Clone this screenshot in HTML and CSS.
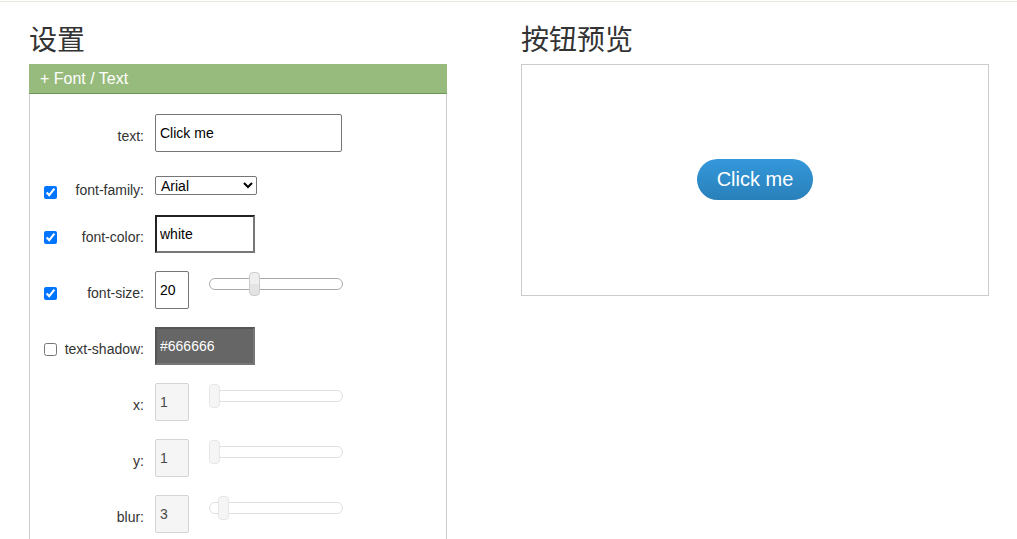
FILE: index.html
```html
<!DOCTYPE html>
<html>
<head>
    <meta charset="UTF-8">
    <title>按钮生成器</title>
    <link rel="stylesheet" href="styles.css">
</head>
<body>

<div class="topline"></div>

<div class="page">
    <div class="col">
        <h2>设置</h2>
        <div class="panel">
            <div class="panel-head">+ Font / Text</div>
            <div class="panel-body">
                <div class="row first">
                    <span class="check"></span>
                    <label>text:</label>
                    <input class="txt wide" type="text" value="Click me">
                </div>
                <div class="row short">
                    <span class="check"><input type="checkbox" checked></span>
                    <label>font-family:</label>
                    <select>
                        <option>Arial</option>
                        <option>Verdana</option>
                        <option>Georgia</option>
                    </select>
                </div>
                <div class="row">
                    <span class="check"><input type="checkbox" checked></span>
                    <label>font-color:</label>
                    <input class="txt color" type="text" value="white">
                </div>
                <div class="row">
                    <span class="check"><input type="checkbox" checked></span>
                    <label>font-size:</label>
                    <input class="txt num" type="text" value="20">
                    <input class="slider" type="range" min="0" max="60" value="20">
                </div>
                <div class="row">
                    <span class="check"><input type="checkbox"></span>
                    <label>text-shadow:</label>
                    <input class="txt color dark" type="text" value="#666666">
                </div>
                <div class="row">
                    <span class="check"></span>
                    <label>x:</label>
                    <input class="txt num" type="text" value="1" disabled>
                    <input class="slider" type="range" min="0" max="100" value="0" disabled>
                </div>
                <div class="row">
                    <span class="check"></span>
                    <label>y:</label>
                    <input class="txt num" type="text" value="1" disabled>
                    <input class="slider" type="range" min="0" max="100" value="0" disabled>
                </div>
                <div class="row">
                    <span class="check"></span>
                    <label>blur:</label>
                    <input class="txt num" type="text" value="3" disabled>
                    <input class="slider" type="range" min="0" max="40" value="3" disabled>
                </div>
            </div>
        </div>
    </div>

    <div class="col">
        <h2>按钮预览</h2>
        <div class="preview">
            <a class="demo-btn">Click me</a>
        </div>
    </div>
</div>

</body>
</html>
```

FILE: styles.css
```css
html {
    box-sizing: border-box;
}
*, *:before, *:after {
    box-sizing: inherit;
}

body{
    margin: 0;
    font-family: "Liberation Sans", Arial, "Noto Sans CJK SC", sans-serif;
    color: #333;
    background: #fff;
}

.topline{
    margin-top: 1px;
    border-top: 1px solid #e8e4de;
}

.page{
    display: grid;
    grid-template-columns: 418px 468px;
    column-gap: 74px;
    padding: 0 29px;
}

h2{
    font-family: "Noto Sans CJK SC", sans-serif;
    font-weight: normal;
    font-size: 28px;
    line-height: 34px;
    margin: 19px 0 9px 0;
    color: #333;
}

/* settings panel */

.panel-head{
    background-color: #97bb7c;
    border-bottom: 1px solid #6f9457;
    color: #fff;
    font-size: 16px;
    line-height: 28px;
    padding: 1px 0 0 11px;
}

.panel-body{
    border: 1px solid #ccc;
    border-top: none;
    padding: 20px 0 20px 14px;
}

.row{
    display: flex;
    align-items: flex-start;
    height: 38px;
    margin-bottom: 18px;
}
.row.first{
    margin-bottom: 24px;
}
.row.short{
    height: 21px;
}

.check{
    width: 13px;
    flex: none;
}
.check input{
    margin: 16px 0 0 0;
    width: 13px;
    height: 13px;
}
.short .check input{
    margin-top: 10px;
}

.row label{
    width: 87px;
    flex: none;
    text-align: right;
    font-size: 14px;
    line-height: 16px;
    padding-top: 14px;
    color: #333;
}
.short label{
    padding-top: 6px;
}

.txt{
    margin: 0 0 0 11px;
    height: 38px;
    font-family: "Liberation Sans", Arial, sans-serif;
    font-size: 14px;
    color: #000;
    border: 1px solid #767676;
    border-radius: 2px;
    padding: 0 4px;
    background: #fff;
}
.txt.wide{
    width: 187px;
}
.txt.num{
    width: 34px;
}
.txt.color{
    width: 100px;
    border: 2px solid;
    border-color: #222 #777 #777 #222;
    border-radius: 0;
    padding: 0 3px;
}
.txt.dark{
    background: #666;
    color: #fff;
    border-color: #555 #777 #777 #555;
}
.txt:disabled{
    background: #f5f5f5;
    border-color: #d4d4d4;
    color: #4a4a4a;
}

select{
    margin-left: 11px;
    width: 102px;
    height: 19px;
    padding: 0 0 0 1px;
    font-family: "Liberation Sans", Arial, sans-serif;
    font-size: 14px;
    color: #000;
    border: 1px solid #767676;
    border-radius: 2px;
    background: #fff;
}

/* sliders */

.slider{
    -webkit-appearance: none;
    appearance: none;
    width: 134px;
    height: 24px;
    margin: 1px 0 0 20px;
    background: transparent;
}
.slider::-webkit-slider-runnable-track{
    height: 12px;
    border: 1px solid #aaa;
    border-radius: 6px;
    background: #fff;
}
.slider::-webkit-slider-thumb{
    -webkit-appearance: none;
    width: 11px;
    height: 24px;
    margin: -7px 0 0 -1px;
    border: 1px solid #ccc;
    border-radius: 4px;
    background: linear-gradient(#efefef 50%, #e4e4e4 50%);
}
.slider:disabled::-webkit-slider-runnable-track{
    border-color: #e0e0e0;
}
.slider:disabled::-webkit-slider-thumb{
    border-color: #e6e6e6;
    background: #f5f5f5;
}

/* preview */

.preview{
    height: 232px;
    border: 1px solid #ccc;
    display: flex;
    align-items: center;
    justify-content: center;
}

.demo-btn{
    display: inline-block;
    font-family: "Liberation Sans", Arial, sans-serif;
    font-size: 20px;
    line-height: 23px;
    padding: 9px 20px;
    color: #fff;
    border-radius: 21px;
    background: linear-gradient(#3498db, #2980b9);
    cursor: pointer;
    margin-top: -2px;
}
```
